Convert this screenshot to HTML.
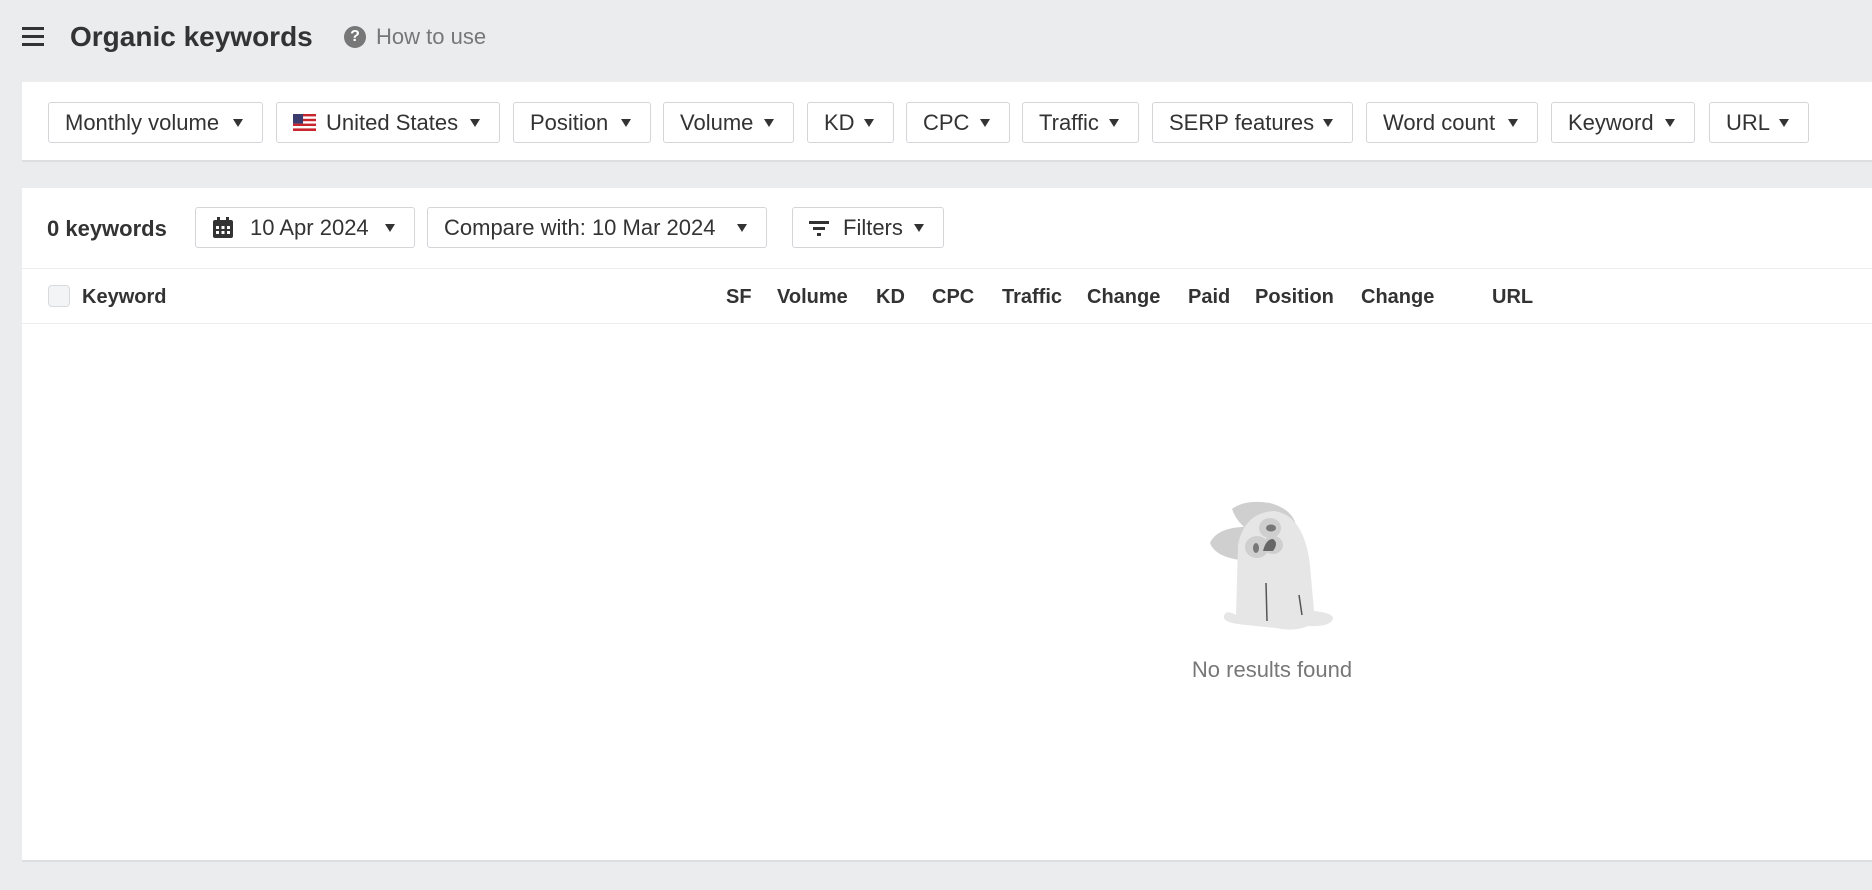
<!DOCTYPE html><html><head><style>
*{box-sizing:border-box;margin:0;padding:0}
body{width:1872px;height:890px;background:#ebecee;font-family:"Liberation Sans",sans-serif;color:#333;position:relative;overflow:hidden}
.a{position:absolute}
.btn{position:absolute;height:41px;border:1px solid #d3d5d8;border-radius:3px;background:#fff;font-size:22px;color:#333;display:flex;align-items:center;padding-left:16px;white-space:nowrap}
.btn .c{margin-left:auto;margin-right:19px;width:0;height:0;border-left:5px solid transparent;border-right:5px solid transparent;border-top:8px solid #333}
.th{position:absolute;top:286px;font-size:20px;font-weight:bold;color:#333}
</style></head><body>
<div class="a" style="left:22px;top:27px;width:22px;height:3px;background:#333;box-shadow:0 8px 0 #333,0 16px 0 #333"></div>
<div class="a" style="left:70px;top:21px;font-size:28px;font-weight:bold;color:#333">Organic keywords</div>
<div class="a" style="left:344px;top:26px;width:22px;height:22px;border-radius:50%;background:#777;color:#fff;font-size:16px;font-weight:bold;text-align:center;line-height:22px">?</div>
<div class="a" style="left:376px;top:24px;font-size:22px;color:#777">How to use</div>

<div class="a" style="left:22px;top:82px;width:1850px;height:80px;background:#fff;border-bottom:2px solid #dcdee1"></div>
<div class="btn" style="left:48px;top:102px;width:215px">Monthly volume<span class="c"></span></div>
<div class="btn" style="left:276px;top:102px;width:224px"><svg width="23" height="17" style="margin-right:10px"><rect width="23" height="17" fill="#fff"/><g fill="#c8262c"><rect y="0" width="23" height="2.4"/><rect y="4.8" width="23" height="2.4"/><rect y="9.6" width="23" height="2.4"/><rect y="14.4" width="23" height="2.6"/></g><rect width="10" height="9.6" fill="#3c3b6e"/></svg>United States<span class="c"></span></div>
<div class="btn" style="left:513px;top:102px;width:138px">Position<span class="c"></span></div>
<div class="btn" style="left:663px;top:102px;width:131px">Volume<span class="c"></span></div>
<div class="btn" style="left:807px;top:102px;width:87px">KD<span class="c"></span></div>
<div class="btn" style="left:906px;top:102px;width:104px">CPC<span class="c"></span></div>
<div class="btn" style="left:1022px;top:102px;width:117px">Traffic<span class="c"></span></div>
<div class="btn" style="left:1152px;top:102px;width:201px">SERP features<span class="c"></span></div>
<div class="btn" style="left:1366px;top:102px;width:172px">Word count<span class="c"></span></div>
<div class="btn" style="left:1551px;top:102px;width:144px">Keyword<span class="c"></span></div>
<div class="btn" style="left:1709px;top:102px;width:100px">URL<span class="c"></span></div>

<div class="a" style="left:22px;top:188px;width:1850px;height:674px;background:#fff;border-bottom:2px solid #dcdee1"></div>
<div class="a" style="left:47px;top:216px;font-size:22px;font-weight:bold">0 keywords</div>
<div class="btn" style="left:195px;top:207px;width:220px"><svg width="22" height="22" style="margin-right:16px"><rect x="1" y="3" width="20" height="18" rx="2" fill="#333"/><rect x="5" y="0" width="3" height="5" fill="#333"/><rect x="14" y="0" width="3" height="5" fill="#333"/><g fill="#fff"><rect x="4" y="9" width="3" height="3"/><rect x="9.5" y="9" width="3" height="3"/><rect x="15" y="9" width="3" height="3"/><rect x="4" y="14" width="3" height="3"/><rect x="9.5" y="14" width="3" height="3"/><rect x="15" y="14" width="3" height="3"/></g></svg>10 Apr 2024<span class="c"></span></div>
<div class="btn" style="left:427px;top:207px;width:340px">Compare with: 10 Mar 2024<span class="c"></span></div>
<div class="btn" style="left:792px;top:207px;width:152px"><svg width="20" height="16" style="margin-right:14px"><rect x="0" y="1" width="20" height="3" fill="#333"/><rect x="4" y="7" width="12" height="3" fill="#333"/><rect x="8" y="13" width="4" height="3" fill="#333"/></svg>Filters<span class="c"></span></div>
<div class="a" style="left:22px;top:268px;width:1850px;height:1px;background:#eceef0"></div>
<div class="a" style="left:48px;top:285px;width:22px;height:22px;border:1px solid #d8dadd;border-radius:4px;background:#f3f4f5"></div>
<div class="th" style="left:82px">Keyword</div>
<div class="th" style="left:726px">SF</div>
<div class="th" style="left:777px">Volume</div>
<div class="th" style="left:876px">KD</div>
<div class="th" style="left:932px">CPC</div>
<div class="th" style="left:1002px">Traffic</div>
<div class="th" style="left:1087px">Change</div>
<div class="th" style="left:1188px">Paid</div>
<div class="th" style="left:1255px">Position</div>
<div class="th" style="left:1361px">Change</div>
<div class="th" style="left:1492px">URL</div>
<div class="a" style="left:22px;top:323px;width:1850px;height:1px;background:#eceef0"></div>

<svg class="a" style="left:1200px;top:495px" width="140" height="140" viewBox="0 0 140 140">
<path d="M32 14 Q45 4 70 8 Q92 14 96 30 L60 42 Q38 32 32 14Z" fill="#cfcfcf"/>
<path d="M10 48 Q18 30 56 32 L50 66 Q16 64 10 48Z" fill="#cfcfcf"/>
<path d="M36 120 L38 50 Q44 18 74 16 Q104 20 110 70 L114 116 Q134 118 133 124 Q130 132 108 131 Q95 137 76 133 L46 130 Q22 128 24 121 Q26 114 36 120Z" fill="#e6e6e6"/>
<ellipse cx="70" cy="33" rx="11" ry="10" fill="#cfcfcf"/>
<ellipse cx="57" cy="52" rx="12" ry="11" fill="#cfcfcf"/>
<ellipse cx="73" cy="50" rx="10" ry="9" fill="#cfcfcf"/>
<ellipse cx="71" cy="33" rx="5" ry="3.5" fill="#777"/>
<ellipse cx="56" cy="53" rx="3" ry="5" fill="#777"/>
<path d="M63 56 Q66 44 73 44 Q79 48 73 56Z" fill="#666"/>
<path d="M66 88 L67 126" stroke="#555" stroke-width="1.5"/>
<path d="M99 100 L102 120" stroke="#555" stroke-width="1.5"/>
</svg>
<div class="a" style="left:1172px;top:657px;width:200px;text-align:center;font-size:22px;color:#777">No results found</div>
</body></html>
